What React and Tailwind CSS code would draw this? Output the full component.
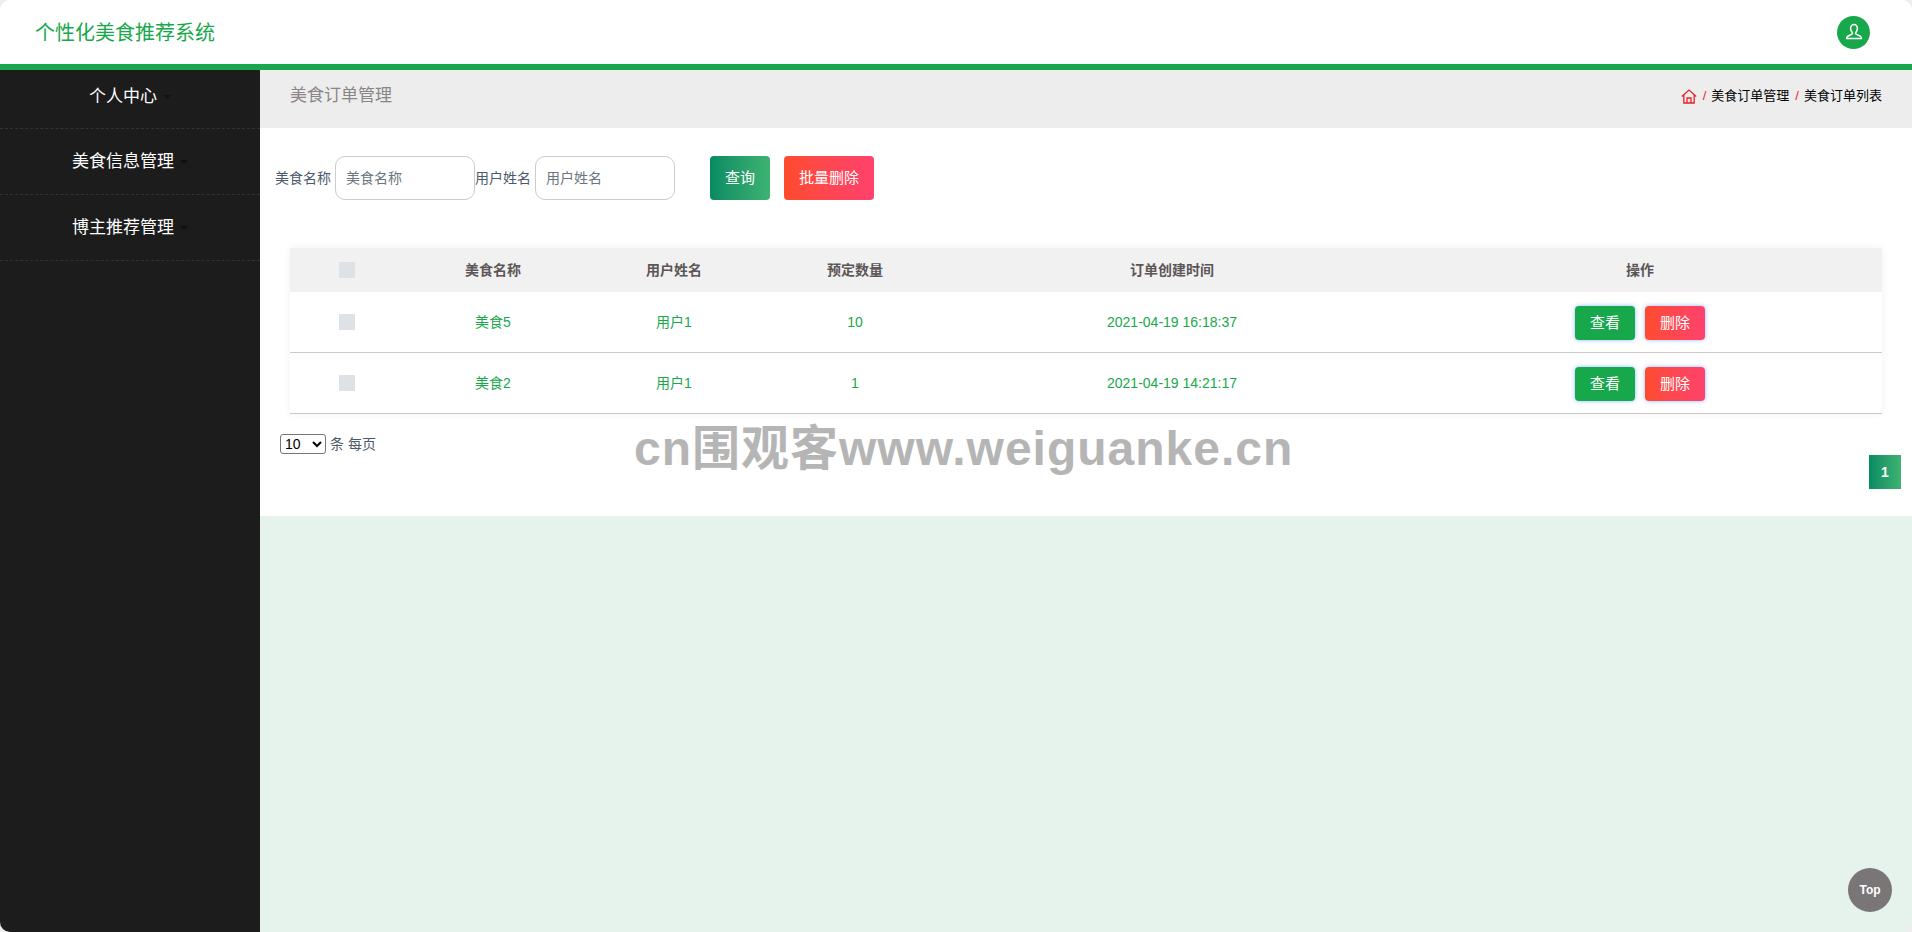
import React from "react";

const font = { fontFamily: '"Liberation Sans", "Noto Sans CJK SC", sans-serif' };

const rows = [
    { name: "美食5", user: "用户1", count: "10", time: "2021-04-19 16:18:37" },
    { name: "美食2", user: "用户1", count: "1", time: "2021-04-19 14:21:17" },
];

const menu = ["个人中心", "美食信息管理", "博主推荐管理"];

const cols = "grid grid-cols-[114px_178px_184px_178px_456px_482px] items-center text-center";

function HomeIcon() {
    return (
        <svg width="16" height="15" viewBox="0 0 16 15" fill="none" stroke="#e8202a" strokeWidth="1.3">
            <path d="M0.8 7.4 L8 1 L15.2 7.4" />
            <path d="M2.8 6 V14 H13.2 V6" />
            <path d="M6 14 V9 H10 V14" />
        </svg>
    );
}

function UserIcon() {
    return (
        <svg width="18" height="18" viewBox="0 0 18 18" fill="none" stroke="#fff" strokeWidth="1.5">
            <path d="M9 1.5 C6.8 1.5 5.6 3.2 5.6 5.3 C5.6 7.2 6.4 8.6 7.2 9.5 C7.6 10 7.4 11 6.6 11.4 L2.8 13.2 C2 13.6 1.6 14.2 1.6 15.5 H16.4 C16.4 14.2 16 13.6 15.2 13.2 L11.4 11.4 C10.6 11 10.4 10 10.8 9.5 C11.6 8.6 12.4 7.2 12.4 5.3 C12.4 3.2 11.2 1.5 9 1.5 Z" />
        </svg>
    );
}

function FilterField({ label }) {
    return (
        <div className="flex items-center">
            <span className="w-[60px] text-sm text-[#4c5a6b]">{label}</span>
            <input
                placeholder={label}
                className="w-[140px] h-[44px] px-[10px] text-sm rounded-[10px] border border-[#ccc] bg-white placeholder:text-[#6c757d]"
            />
        </div>
    );
}

export default function App() {
    return (
        <div className="bg-[#eeeeee]" style={font}>
            <div className="h-[932px] rounded-[10px] overflow-hidden flex flex-col bg-[#e6f3ec]">
                <header className="h-[70px] shrink-0 bg-white border-b-[6px] border-[#17a84b] flex items-center justify-between pl-[35px] pr-[42px]">
                    <div className="text-xl text-[#17a84b] pt-[1px]">个性化美食推荐系统</div>
                    <div className="w-[33px] h-[33px] rounded-full bg-[#17a84b] flex items-center justify-center">
                        <UserIcon />
                    </div>
                </header>

                <div className="flex flex-1">
                    <aside className="w-[260px] shrink-0 bg-[#1c1c1c]">
                        {menu.map((item, i) => (
                            <div
                                key={item}
                                className={`${i === 0 ? "h-[59px] pb-[5px]" : "h-[66px] pt-[1px]"} flex items-center justify-center text-[17px] text-white border-b border-dashed border-[#2e3242]`}
                            >
                                {item}
                                <span className="ml-[6px] w-0 h-0 border-x-4 border-t-4 border-x-transparent border-t-[#101010]" />
                            </div>
                        ))}
                    </aside>

                    <main className="flex-1 min-w-0">
                        <div className="h-[58px] pb-[6px] bg-[#ededed] flex items-center justify-between pl-[30px] pr-[30px]">
                            <div className="text-[17px] text-[#8a8586]">美食订单管理</div>
                            <div className="flex items-center gap-[5px] text-[13px] text-black">
                                <HomeIcon />
                                <span className="text-[#e8202a] ml-[1px]">/</span>
                                <span>美食订单管理</span>
                                <span className="text-[#e8202a] ml-[1px]">/</span>
                                <span>美食订单列表</span>
                            </div>
                        </div>

                        <div className="h-[388px] bg-white relative">
                            <div className="flex items-center pt-[28px] pl-[15px]">
                                <FilterField label="美食名称" />
                                <FilterField label="用户姓名" />
                                <button className="ml-[35px] w-[60px] h-[44px] rounded text-[15px] text-white bg-gradient-to-r from-[#058b63] to-[#3cb371]">
                                    查询
                                </button>
                                <button className="ml-[14px] w-[90px] h-[44px] rounded text-[15px] text-white bg-gradient-to-r from-[#ff4b2b] to-[#ff416c]">
                                    批量删除
                                </button>
                            </div>

                            <div className="ml-[30px] mr-[30px] mt-[48px] shadow-[0_0_8px_rgba(0,0,0,0.06)]">
                                <div className={`${cols} h-[44px] bg-[#f1f1f1] text-sm font-bold text-[#5c5656]`}>
                                    <div className="w-4 h-4 bg-[#dee2e6] ml-[49px]" />
                                    <div>美食名称</div>
                                    <div>用户姓名</div>
                                    <div>预定数量</div>
                                    <div>订单创建时间</div>
                                    <div className="pr-[2px]">操作</div>
                                </div>
                                {rows.map((row) => (
                                    <div
                                        key={row.name}
                                        className={`${cols} h-[61px] bg-white border-b border-[#ccc9cb] text-sm text-[#17a84b]`}
                                    >
                                        <div className="w-4 h-4 bg-[#dee2e6] ml-[49px]" />
                                        <div>{row.name}</div>
                                        <div>{row.user}</div>
                                        <div>{row.count}</div>
                                        <div>{row.time}</div>
                                        <div className="flex justify-center gap-[10px] pr-[2px] pt-[2px]">
                                            <button className="w-[60px] h-[34px] rounded text-[15px] text-white bg-[#17a84b] shadow-[0_0_4px_rgba(60,140,255,0.6)]">
                                                查看
                                            </button>
                                            <button className="w-[60px] h-[34px] rounded text-[15px] text-white bg-gradient-to-r from-[#ff4b2b] to-[#ff416c] shadow-[0_0_4px_rgba(60,140,255,0.6)]">
                                                删除
                                            </button>
                                        </div>
                                    </div>
                                ))}
                            </div>

                            <div className="flex items-center gap-[4px] ml-[20px] mt-[20px] text-sm text-[#4c5a6b]">
                                <select className="w-[46px] h-[20px] text-sm text-black border border-[#767676] rounded-[3px] bg-white">
                                    <option>10</option>
                                </select>
                                <span>条 每页</span>
                            </div>

                            <div className="flex justify-end mr-[11px] mt-[1px]">
                                <div className="w-[32px] h-[34px] flex items-center justify-center text-sm font-bold text-white bg-gradient-to-r from-[#058b63] to-[#3cb371]">
                                    1
                                </div>
                            </div>

                            <div className="absolute left-[374px] top-[297px] text-[48px] font-bold leading-none tracking-[1px] text-[#b5b5b5] pointer-events-none whitespace-nowrap">
                                cn围观客www.weiguanke.cn
                            </div>
                        </div>
                    </main>
                </div>

                <div className="fixed left-[1848px] top-[868px] w-[44px] h-[44px] rounded-full bg-[#7a7678] flex items-center justify-center text-xs font-bold text-white">
                    Top
                </div>
            </div>
        </div>
    );
}
